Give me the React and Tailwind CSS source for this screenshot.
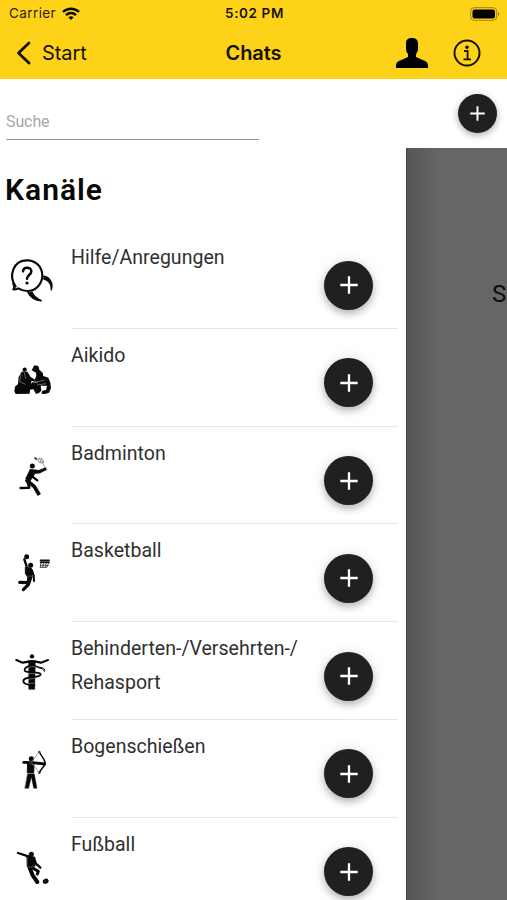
const ink = {
  fill: 'none',
  stroke: '#080808',
  strokeLinecap: 'round',
  strokeLinejoin: 'round',
};

function HelpIcon() {
  return (
    <g transform="translate(0 27)" {...ink}>
      <path d="M47 139C36 126 33 105 40 88C48 68 66 60 84 61C109 62 127 82 127 107C126 134 106 153 82 153C71 153 62 149 55 145C50 148 45 149 40 148C44 143 45 138 40 132" strokeWidth="6.5" />
      <path d="M84 157C91 171 107 181 124 182C110 176 100 168 96 156" strokeWidth="4.5" fill="#080808" />
      <path d="M131 109C149 111 160 130 154 149C155 131 146 120 131 116" strokeWidth="4.5" fill="#080808" />
      <path d="M69 94C70 79 94 80 94 94C94 105 81 105 81 116" strokeWidth="7.5" />
      <circle cx="81" cy="129" r="4.8" fill="#080808" stroke="none" />
    </g>
  );
}

function AikidoIcon() {
  return (
    <g transform="translate(0 49)" fill="#080808">
      <circle cx="74" cy="73" r="6.5" />
      <path d="M65 79L82 79L92 95L112 107L108 111L95 106L92 116L97 111L121 112L124 136L117 143L108 146L100 132L90 133L89 145L47 146L43 138L45 124L54 116L56 95Z" />
      <path d="M95 75L103 60L115 62L118 73L128 82L130 92L145 97L151 112L153 128L147 142L135 146L124 145L127 136L138 134L141 121L117 121L111 109L104 103L109 91L108 82Z" />
      <path d="M63 87L59 109L77 117M73 81L77 99M104 106L109 110L135 104M111 119L138 115" fill="none" stroke="#bbb" strokeWidth="1.5" />
    </g>
  );
}

function BadmintonIcon() {
  return (
    <g transform="translate(0 56)" {...ink}>
      <circle cx="97" cy="61" r="7.5" fill="#080808" stroke="none" />
      <path d="M90 72L77 100L88 109L98 94L105 83L119 82L139 72L137 66L118 74Z" fill="#080808" strokeWidth="2.5" />
      <path d="M96 92L112 104" strokeWidth="7" />
      <path d="M78 102L103 123L118 148" strokeWidth="11" strokeLinecap="butt" />
      <path d="M82 107L88 126L62 127" strokeWidth="7.5" />
      <ellipse cx="122" cy="45" rx="9" ry="6" transform="rotate(35 122 45)" stroke="#777" strokeWidth="2.5" />
      <path d="M128 50L135 66M116 41L128 48M120 50L126 39" stroke="#777" strokeWidth="2" />
      <path d="M105 37L109 40" strokeWidth="5" stroke="#333" />
    </g>
  );
}

function BasketballIcon() {
  return (
    <g transform="translate(0 47)" {...ink}>
      <circle cx="80" cy="51" r="7.5" fill="#080808" stroke="none" />
      <circle cx="92" cy="77" r="7.5" fill="#080808" stroke="none" />
      <path d="M73 59L80 80" strokeWidth="7" />
      <path d="M77 83L93 85L99 97L95 110L83 112L77 103Z" fill="#080808" strokeWidth="3" />
      <path d="M95 91L101 106L102 124" strokeWidth="6" />
      <path d="M88 107L84 129L59 128M93 111L85 135L70 150" strokeWidth="9.5" />
      <path d="M79 109L96 110" stroke="#999" strokeWidth="1" />
      <path d="M122 62H147M122 68H147" stroke="#111" strokeWidth="5.5" />
      <path d="M122 72L121 83M130 72L128 83M138 72L136 83M145 72L142 81M121 77H144M121 83H140" stroke="#444" strokeWidth="2.8" />
    </g>
  );
}

function RehabIcon() {
  return (
    <g transform="translate(0 54)" {...ink}>
      <circle cx="96" cy="49" r="6.5" fill="#080808" stroke="none" />
      <path d="M49 60L68 68L90 64H103L123 68L144 60" strokeWidth="6.5" />
      <path d="M86 62H106L104 148H87Z" fill="#080808" strokeWidth="1.5" />
      <path d="M133 91C132 83 122 85 113 81C94 73 73 81 74 91C75 102 123 92 122 104C121 115 69 107 70 124C71 134 90 135 103 135" strokeWidth="5.5" />
      <path d="M86 83C96 78 108 80 115 84M84 101H107M84 118L103 115M86 130H102" stroke="#bbb" strokeWidth="1.5" />
      <path d="M128 84L134 95" strokeWidth="4" stroke="#777" />
    </g>
  );
}

function ArcheryIcon() {
  return (
    <g transform="translate(0 47)" {...ink}>
      <circle cx="94" cy="69" r="7.5" fill="#080808" stroke="none" />
      <path d="M71 80L98 81L134 85" strokeWidth="8.5" />
      <path d="M84 80H102L101 111H83Z" fill="#080808" strokeWidth="3" />
      <path d="M83 114H103L111 158H101L94 124L86 158H75Z" fill="#080808" strokeWidth="1" />
      <path d="M118 48C121 60 136 70 135 82C135 94 120 101 118 112" strokeWidth="4.5" />
      <path d="M118 48L94 80L118 112" stroke="#777" strokeWidth="2.2" />
      <path d="M87 82L94 86L108 86" stroke="#aaa" strokeWidth="1" />
      <circle cx="118" cy="49" r="3.5" fill="#444" stroke="none" />
      <circle cx="118" cy="111" r="3.5" fill="#444" stroke="none" />
    </g>
  );
}

function FootballIcon() {
  return (
    <g transform="translate(0 53)" {...ink}>
      <circle cx="94" cy="56" r="7.5" fill="#080808" stroke="none" />
      <path d="M54 52L85 62" strokeWidth="7" />
      <path d="M83 63L102 66L107 83L121 96" strokeWidth="7" />
      <path d="M82 62L103 67L105 92L83 93Z" fill="#080808" strokeWidth="3" />
      <path d="M88 94L98 119L112 139" strokeWidth="12" />
      <path d="M98 97L115 107L112 115" strokeWidth="9" />
      <path d="M83 94L104 93" stroke="#999" strokeWidth="1.2" />
      <ellipse cx="137" cy="137" rx="9" ry="7.5" transform="rotate(-25 137 137)" fill="#080808" stroke="none" />
      <path d="M132 141L139 135" stroke="#777" strokeWidth="1" />
    </g>
  );
}

const channels = [
  { name: 'Hilfe/Anregungen', Icon: HelpIcon },
  { name: 'Aikido', Icon: AikidoIcon },
  { name: 'Badminton', Icon: BadmintonIcon },
  { name: 'Basketball', Icon: BasketballIcon },
  { name: 'Behinderten-/Versehrten-/ Rehasport', Icon: RehabIcon },
  { name: 'Bogenschießen', Icon: ArcheryIcon },
  { name: 'Fußball', Icon: FootballIcon },
];

function Plus({ className }) {
  return (
    <svg viewBox="0 0 18 18" className={className} aria-hidden="true">
      <path d="M9 .3V17.7M.3 9H17.7" stroke="#fff" strokeWidth="2.3" />
    </svg>
  );
}

function StatusBar() {
  return (
    <div className="grid h-[27px] grid-cols-[1fr_auto_1fr] items-center pl-[9px] pr-[7px] pt-px font-['Inter',sans-serif] text-[13.5px] leading-none">
      <div className="flex items-center gap-[6px] text-[#2b2507]">
        <span className="tracking-[0.4px]">Carrier</span>
        <svg viewBox="0 0 18 14" className="h-[14px] w-[18px]" fill="none" stroke="#0c0a00" strokeWidth="2.5">
          <path d="M1 4.9C5.6.6 12.4.6 17 4.9" />
          <path d="M4 8.1C7 5.4 11 5.4 14 8.1" />
          <path d="M6.4 10.3C8 9 10 9 11.6 10.3L9 13Z" fill="#0c0a00" stroke="none" />
        </svg>
      </div>
      <span className="whitespace-nowrap text-center font-semibold tracking-[0.6px] text-[#171303]">5:02 PM</span>
      <svg viewBox="0 0 30 14" className="h-[14px] w-[30px] justify-self-end">
        <rect x=".7" y=".7" width="26" height="12.6" rx="3.5" fill="none" stroke="#9c8213" strokeWidth="1" />
        <rect x="2.5" y="2.5" width="22.5" height="9" rx="2" fill="#000" />
        <path d="M28 5Q30.5 7 28 9Z" fill="#8e7612" />
      </svg>
    </div>
  );
}

function NavBar() {
  return (
    <div className="grid h-[51px] grid-cols-[1fr_auto_1fr] items-center pl-[16px] pr-[26px] font-['Inter',sans-serif] text-[20px] leading-none text-[#151200]">
      <div className="flex items-center gap-[11px]">
        <svg viewBox="0 0 15 24" className="h-6 w-[15px]" fill="none" stroke="#151200" strokeWidth="2.8" strokeLinecap="round" strokeLinejoin="round">
          <path d="M13 2L2.5 12L13 22" />
        </svg>
        <span className="tracking-[-0.1px]">Start</span>
      </div>
      <span className="pl-[10px] font-semibold tracking-[-0.1px]">Chats</span>
      <div className="flex items-center justify-end gap-[25px]">
        <svg viewBox="0 0 32 30" className="h-[30px] w-8" fill="#000">
          <path d="M10 5C10 1 13 0 16 0C20 0 22 2 22 6V11C22 14 20 15 20 17V19L29 23Q32 24 32 28V30H0V28Q0 24 3 23L12 19V16Q10 14 10 11Z" />
        </svg>
        <svg viewBox="0 0 28 28" className="h-7 w-7" fill="none" stroke="#151200">
          <circle cx="14" cy="14" r="12.5" strokeWidth="2" />
          <path d="M11 12H14.6V20M10.5 20.3H18" strokeWidth="1.8" />
          <circle cx="14" cy="8.3" r="1.8" fill="#151200" stroke="none" />
        </svg>
      </div>
    </div>
  );
}

function ChannelRow({ name, Icon }) {
  return (
    <li className="flex h-[97.75px]">
      <svg viewBox="0 0 180 293.25" className="h-[97.75px] w-[60px] shrink-0" aria-hidden="true">
        <Icon />
      </svg>
      <div className="ml-[11px] flex w-[327px] justify-between border-b-[1.5px] border-[#e7e7e7] pr-[25px]">
        <p className="w-[232px] pt-[10px] text-[19.5px] leading-[34px] tracking-[0.03px] text-[#303030]">{name}</p>
        <button className="mt-[29.5px] flex h-[49px] w-[49px] shrink-0 items-center justify-center rounded-full bg-[#202020] shadow-[0_4px_7px_rgba(0,0,0,0.22),0_1px_14px_rgba(0,0,0,0.12)]">
          <Plus className="h-[18px] w-[18px]" />
        </button>
      </div>
    </li>
  );
}

export default function App() {
  return (
    <div className="flex h-[900px] w-[507px] flex-col overflow-hidden bg-white font-['Roboto',sans-serif]">
      <header className="h-[79px] shrink-0 bg-[#ffd21a]">
        <StatusBar />
        <NavBar />
      </header>
      <div className="flex h-[69px] shrink-0 justify-between pl-[6px] pr-[10px]">
        <input
          placeholder="Suche"
          aria-label="Suche"
          className="mt-[23px] h-[38px] w-[253px] border-b border-[#969696] pt-[2px] text-[16px] tracking-[-0.1px] outline-none placeholder:text-[#a9a9a9]"
        />
        <button className="mt-[15px] flex h-[39px] w-[39px] items-center justify-center rounded-full bg-[#202020] shadow-[0_3px_6px_rgba(0,0,0,0.22),0_1px_10px_rgba(0,0,0,0.12)]">
          <Plus className="h-[15px] w-[15px]" />
        </button>
      </div>
      <div className="flex min-h-0 flex-1">
        <aside className="w-[406px] shrink-0 overflow-hidden bg-white">
          <h1 className="h-[83.2px] pl-[5px] pt-[22px] text-[30px] font-semibold leading-10 tracking-[1px] text-[#080808]">Kanäle</h1>
          <ul>
            {channels.map((channel) => (
              <ChannelRow key={channel.name} {...channel} />
            ))}
          </ul>
        </aside>
        <main className="flex-1 overflow-hidden border-l border-[#454545] bg-[#666] bg-linear-to-r from-[#565656] to-[#666] to-[34px] pl-[85px] pt-[132px] text-[24px] leading-7 text-[#0b0b0b]">
          S
        </main>
      </div>
    </div>
  );
}
